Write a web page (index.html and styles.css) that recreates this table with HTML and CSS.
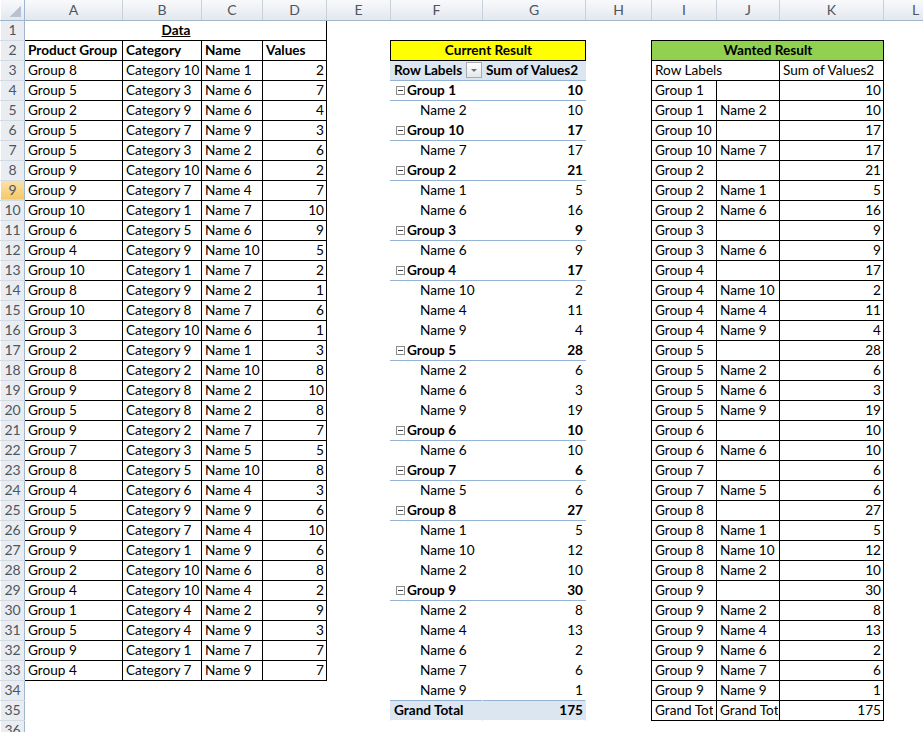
FILE: index.html
```html
<!DOCTYPE html>
<html>
<head>
<meta charset="utf-8">
<title>Sheet</title>
<link rel="stylesheet" href="styles.css">
</head>
<body>
<table class="sheet">
<colgroup>
<col class="c-rh"><col class="c-a"><col class="c-b"><col class="c-c"><col class="c-d"><col class="c-e"><col class="c-f"><col class="c-g"><col class="c-h"><col class="c-i"><col class="c-j"><col class="c-k"><col class="c-l">
</colgroup>
<tr class="ch"><th class="corner"></th><th>A</th><th>B</th><th>C</th><th>D</th><th>E</th><th>F</th><th>G</th><th>H</th><th>I</th><th>J</th><th>K</th><th>L</th></tr>
<tr><td class="rh">1</td><td colspan="4" class="data"><span>Data</span></td><td></td><td></td><td></td><td></td><td></td><td></td><td></td><td></td></tr>
<tr><td class="rh">2</td><td class="x b">Product Group</td><td class="x b">Category</td><td class="x b">Name</td><td class="x b">Values</td><td></td><td colspan="2" class="yel">Current Result</td><td></td><td colspan="3" class="grn">Wanted Result</td><td></td></tr>
<tr><td class="rh">3</td><td class="x">Group 8</td><td class="x">Category 10</td><td class="x">Name 1</td><td class="x r">2</td><td></td><td class="ph"><div class="phin"><span>Row Labels</span><span class="dd"></span></div></td><td class="ph">Sum of Values2</td><td></td><td colspan="2" class="x">Row Labels</td><td class="x">Sum of Values2</td><td></td></tr>
<tr><td class="rh">4</td><td class="x">Group 5</td><td class="x">Category 3</td><td class="x">Name 6</td><td class="x r">7</td><td></td><td class="pg"><span class="tg"></span>Group 1</td><td class="pg r">10</td><td></td><td class="x">Group 1</td><td class="x"></td><td class="x r">10</td><td></td></tr>
<tr><td class="rh">5</td><td class="x">Group 2</td><td class="x">Category 9</td><td class="x">Name 6</td><td class="x r">4</td><td></td><td class="pn">Name 2</td><td class="r">10</td><td></td><td class="x">Group 1</td><td class="x">Name 2</td><td class="x r">10</td><td></td></tr>
<tr><td class="rh">6</td><td class="x">Group 5</td><td class="x">Category 7</td><td class="x">Name 9</td><td class="x r">3</td><td></td><td class="pg"><span class="tg"></span>Group 10</td><td class="pg r">17</td><td></td><td class="x">Group 10</td><td class="x"></td><td class="x r">17</td><td></td></tr>
<tr><td class="rh">7</td><td class="x">Group 5</td><td class="x">Category 3</td><td class="x">Name 2</td><td class="x r">6</td><td></td><td class="pn">Name 7</td><td class="r">17</td><td></td><td class="x">Group 10</td><td class="x">Name 7</td><td class="x r">17</td><td></td></tr>
<tr><td class="rh">8</td><td class="x">Group 9</td><td class="x">Category 10</td><td class="x">Name 6</td><td class="x r">2</td><td></td><td class="pg"><span class="tg"></span>Group 2</td><td class="pg r">21</td><td></td><td class="x">Group 2</td><td class="x"></td><td class="x r">21</td><td></td></tr>
<tr><td class="rh sel">9</td><td class="x">Group 9</td><td class="x">Category 7</td><td class="x">Name 4</td><td class="x r">7</td><td></td><td class="pn">Name 1</td><td class="r">5</td><td></td><td class="x">Group 2</td><td class="x">Name 1</td><td class="x r">5</td><td></td></tr>
<tr><td class="rh">10</td><td class="x">Group 10</td><td class="x">Category 1</td><td class="x">Name 7</td><td class="x r">10</td><td></td><td class="pn">Name 6</td><td class="r">16</td><td></td><td class="x">Group 2</td><td class="x">Name 6</td><td class="x r">16</td><td></td></tr>
<tr><td class="rh">11</td><td class="x">Group 6</td><td class="x">Category 5</td><td class="x">Name 6</td><td class="x r">9</td><td></td><td class="pg"><span class="tg"></span>Group 3</td><td class="pg r">9</td><td></td><td class="x">Group 3</td><td class="x"></td><td class="x r">9</td><td></td></tr>
<tr><td class="rh">12</td><td class="x">Group 4</td><td class="x">Category 9</td><td class="x">Name 10</td><td class="x r">5</td><td></td><td class="pn">Name 6</td><td class="r">9</td><td></td><td class="x">Group 3</td><td class="x">Name 6</td><td class="x r">9</td><td></td></tr>
<tr><td class="rh">13</td><td class="x">Group 10</td><td class="x">Category 1</td><td class="x">Name 7</td><td class="x r">2</td><td></td><td class="pg"><span class="tg"></span>Group 4</td><td class="pg r">17</td><td></td><td class="x">Group 4</td><td class="x"></td><td class="x r">17</td><td></td></tr>
<tr><td class="rh">14</td><td class="x">Group 8</td><td class="x">Category 9</td><td class="x">Name 2</td><td class="x r">1</td><td></td><td class="pn">Name 10</td><td class="r">2</td><td></td><td class="x">Group 4</td><td class="x">Name 10</td><td class="x r">2</td><td></td></tr>
<tr><td class="rh">15</td><td class="x">Group 10</td><td class="x">Category 8</td><td class="x">Name 7</td><td class="x r">6</td><td></td><td class="pn">Name 4</td><td class="r">11</td><td></td><td class="x">Group 4</td><td class="x">Name 4</td><td class="x r">11</td><td></td></tr>
<tr><td class="rh">16</td><td class="x">Group 3</td><td class="x">Category 10</td><td class="x">Name 6</td><td class="x r">1</td><td></td><td class="pn">Name 9</td><td class="r">4</td><td></td><td class="x">Group 4</td><td class="x">Name 9</td><td class="x r">4</td><td></td></tr>
<tr><td class="rh">17</td><td class="x">Group 2</td><td class="x">Category 9</td><td class="x">Name 1</td><td class="x r">3</td><td></td><td class="pg"><span class="tg"></span>Group 5</td><td class="pg r">28</td><td></td><td class="x">Group 5</td><td class="x"></td><td class="x r">28</td><td></td></tr>
<tr><td class="rh">18</td><td class="x">Group 8</td><td class="x">Category 2</td><td class="x">Name 10</td><td class="x r">8</td><td></td><td class="pn">Name 2</td><td class="r">6</td><td></td><td class="x">Group 5</td><td class="x">Name 2</td><td class="x r">6</td><td></td></tr>
<tr><td class="rh">19</td><td class="x">Group 9</td><td class="x">Category 8</td><td class="x">Name 2</td><td class="x r">10</td><td></td><td class="pn">Name 6</td><td class="r">3</td><td></td><td class="x">Group 5</td><td class="x">Name 6</td><td class="x r">3</td><td></td></tr>
<tr><td class="rh">20</td><td class="x">Group 5</td><td class="x">Category 8</td><td class="x">Name 2</td><td class="x r">8</td><td></td><td class="pn">Name 9</td><td class="r">19</td><td></td><td class="x">Group 5</td><td class="x">Name 9</td><td class="x r">19</td><td></td></tr>
<tr><td class="rh">21</td><td class="x">Group 9</td><td class="x">Category 2</td><td class="x">Name 7</td><td class="x r">7</td><td></td><td class="pg"><span class="tg"></span>Group 6</td><td class="pg r">10</td><td></td><td class="x">Group 6</td><td class="x"></td><td class="x r">10</td><td></td></tr>
<tr><td class="rh">22</td><td class="x">Group 7</td><td class="x">Category 3</td><td class="x">Name 5</td><td class="x r">5</td><td></td><td class="pn">Name 6</td><td class="r">10</td><td></td><td class="x">Group 6</td><td class="x">Name 6</td><td class="x r">10</td><td></td></tr>
<tr><td class="rh">23</td><td class="x">Group 8</td><td class="x">Category 5</td><td class="x">Name 10</td><td class="x r">8</td><td></td><td class="pg"><span class="tg"></span>Group 7</td><td class="pg r">6</td><td></td><td class="x">Group 7</td><td class="x"></td><td class="x r">6</td><td></td></tr>
<tr><td class="rh">24</td><td class="x">Group 4</td><td class="x">Category 6</td><td class="x">Name 4</td><td class="x r">3</td><td></td><td class="pn">Name 5</td><td class="r">6</td><td></td><td class="x">Group 7</td><td class="x">Name 5</td><td class="x r">6</td><td></td></tr>
<tr><td class="rh">25</td><td class="x">Group 5</td><td class="x">Category 9</td><td class="x">Name 9</td><td class="x r">6</td><td></td><td class="pg"><span class="tg"></span>Group 8</td><td class="pg r">27</td><td></td><td class="x">Group 8</td><td class="x"></td><td class="x r">27</td><td></td></tr>
<tr><td class="rh">26</td><td class="x">Group 9</td><td class="x">Category 7</td><td class="x">Name 4</td><td class="x r">10</td><td></td><td class="pn">Name 1</td><td class="r">5</td><td></td><td class="x">Group 8</td><td class="x">Name 1</td><td class="x r">5</td><td></td></tr>
<tr><td class="rh">27</td><td class="x">Group 9</td><td class="x">Category 1</td><td class="x">Name 9</td><td class="x r">6</td><td></td><td class="pn">Name 10</td><td class="r">12</td><td></td><td class="x">Group 8</td><td class="x">Name 10</td><td class="x r">12</td><td></td></tr>
<tr><td class="rh">28</td><td class="x">Group 2</td><td class="x">Category 10</td><td class="x">Name 6</td><td class="x r">8</td><td></td><td class="pn">Name 2</td><td class="r">10</td><td></td><td class="x">Group 8</td><td class="x">Name 2</td><td class="x r">10</td><td></td></tr>
<tr><td class="rh">29</td><td class="x">Group 4</td><td class="x">Category 10</td><td class="x">Name 4</td><td class="x r">2</td><td></td><td class="pg"><span class="tg"></span>Group 9</td><td class="pg r">30</td><td></td><td class="x">Group 9</td><td class="x"></td><td class="x r">30</td><td></td></tr>
<tr><td class="rh">30</td><td class="x">Group 1</td><td class="x">Category 4</td><td class="x">Name 2</td><td class="x r">9</td><td></td><td class="pn">Name 2</td><td class="r">8</td><td></td><td class="x">Group 9</td><td class="x">Name 2</td><td class="x r">8</td><td></td></tr>
<tr><td class="rh">31</td><td class="x">Group 5</td><td class="x">Category 4</td><td class="x">Name 9</td><td class="x r">3</td><td></td><td class="pn">Name 4</td><td class="r">13</td><td></td><td class="x">Group 9</td><td class="x">Name 4</td><td class="x r">13</td><td></td></tr>
<tr><td class="rh">32</td><td class="x">Group 9</td><td class="x">Category 1</td><td class="x">Name 7</td><td class="x r">7</td><td></td><td class="pn">Name 6</td><td class="r">2</td><td></td><td class="x">Group 9</td><td class="x">Name 6</td><td class="x r">2</td><td></td></tr>
<tr><td class="rh">33</td><td class="x">Group 4</td><td class="x">Category 7</td><td class="x">Name 9</td><td class="x r">7</td><td></td><td class="pn">Name 7</td><td class="r">6</td><td></td><td class="x">Group 9</td><td class="x">Name 7</td><td class="x r">6</td><td></td></tr>
<tr><td class="rh">34</td><td></td><td></td><td></td><td></td><td></td><td class="pn">Name 9</td><td class="r">1</td><td></td><td class="x">Group 9</td><td class="x">Name 9</td><td class="x r">1</td><td></td></tr>
<tr><td class="rh">35</td><td></td><td></td><td></td><td></td><td></td><td class="pt">Grand Total</td><td class="pt r">175</td><td></td><td class="x"><span class="clip">Grand Total</span></td><td class="x"><span class="clip">Grand Total</span></td><td class="x r">175</td><td></td></tr>
<tr><td class="rh">36</td><td></td><td></td><td></td><td></td><td></td><td></td><td></td><td></td><td></td><td></td><td></td><td></td></tr>
</table>
</body>
</html>
```
FILE: styles.css
```css
html, body {
  margin: 0;
  padding: 0;
  background: #fff;
  overflow: hidden;
}
body {
  font-family: Lato, "Liberation Sans", sans-serif;
  font-size: 13.6px;
  color: #000;
}
.sheet {
  border-collapse: collapse;
  table-layout: fixed;
  width: 947px;
}
.c-rh { width: 24px; }
.c-a { width: 98px; }
.c-b { width: 79px; }
.c-c { width: 61px; }
.c-d { width: 64px; }
.c-e { width: 64px; }
.c-f { width: 92px; }
.c-g { width: 103px; }
.c-h { width: 66px; }
.c-i { width: 65px; }
.c-j { width: 63px; }
.c-k { width: 104px; }
.c-l { width: 64px; }

.sheet tr { height: 20px; }
.sheet td {
  padding: 0 2px 0 3px;
  border: 1px dotted transparent;
  white-space: nowrap;
  overflow: hidden;
  line-height: 18px;
  vertical-align: middle;
}
.clip {
  display: block;
  overflow: hidden;
  width: 58px;
}

/* column headers */
.ch th {
  height: 19px;
  padding: 0;
  font-weight: normal;
  font-size: 14px;
  color: #4f555e;
  text-align: center;
  background: linear-gradient(#f8f9fb, #e3e8ee);
  border-right: 1px solid #c8d0da;
  border-bottom: 1px solid #9eb6ce;
  line-height: 18px;
}
.ch th.corner {
  border-right: 1px solid #9eb6ce;
  background:
    linear-gradient(135deg, transparent 50%, #b9c3cf 50%) right 3px bottom 3px / 11px 11px no-repeat,
    linear-gradient(#f8f9fb, #e3e8ee);
}

/* row headers */
.sheet td.rh {
  padding: 0;
  text-align: center;
  font-size: 14px;
  color: #4f555e;
  background: #e9edf2;
  border-right: 1px solid #9eb6ce;
  border-bottom: 1px solid #d3dae3;
}
.sheet td.rh.sel {
  background: linear-gradient(#fbe2ad, #f4c865);
}

/* data table */
.sheet td.data {
  text-align: center;
  font-weight: bold;
  border-right: 1px solid #000;
}
.data span { text-decoration: underline; }
.sheet td.x { border: 1px solid #000; }
.r { text-align: right; }
.b { font-weight: bold; }

.sheet td.yel {
  background: #ffff00;
  border: 1px solid #000;
  font-weight: bold;
  text-align: center;
}
.sheet td.grn {
  background: #92d050;
  border: 1px solid #000;
  font-weight: bold;
  text-align: center;
}

/* pivot */
.sheet td.ph {
  background: #dce6f1;
  font-weight: bold;
  border-left: 1px solid #dce6f1;
  border-right: 1px solid #dce6f1;
  border-bottom: 1px solid #95b3d7;
}
.phin {
  display: flex;
  align-items: center;
  justify-content: space-between;
  height: 18px;
}
.dd {
  width: 14px;
  height: 14px;
  border: 1px solid #a7acb3;
  background: linear-gradient(#ffffff, #e4e7eb);
  display: flex;
  align-items: center;
  justify-content: center;
  margin-right: -2px;
}
.dd::after {
  content: "";
  border-left: 3px solid transparent;
  border-right: 3px solid transparent;
  border-top: 3px solid #6b6f75;
}
.sheet td.pg {
  font-weight: bold;
  border-bottom: 1px solid #95b3d7;
}
.sheet td.pg:not(.r) { padding-left: 5px; }
.tg {
  display: inline-block;
  position: relative;
  width: 7px;
  height: 7px;
  border: 1px solid #8c8c8c;
  background: #fff;
  margin-right: 2px;
  vertical-align: 0px;
}
.tg::after {
  content: "";
  position: absolute;
  left: 1px;
  right: 1px;
  top: 3px;
  height: 1px;
  background: #404040;
}
.sheet td.pn { padding-left: 29px; }
.sheet td.pt {
  background: #dce6f1;
  font-weight: bold;
  border-left: 1px solid #dce6f1;
  border-right: 1px solid #dce6f1;
  border-top: 1px solid #95b3d7;
}
```
